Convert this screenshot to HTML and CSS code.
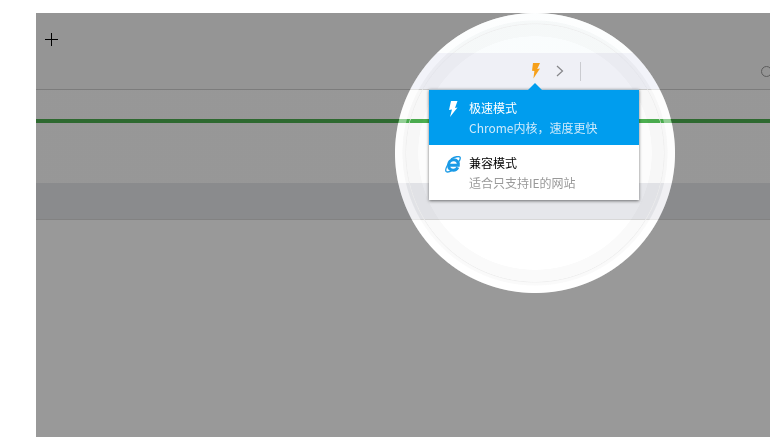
FILE: index.html
```html
<!DOCTYPE html>
<html lang="en">

<head>
    <meta charset="UTF-8" />
    <title>极速模式</title>
    <link rel="stylesheet" href="styles.css">
</head>

<body>
    <div class="screen">
        <div class="tabbar"><span class="new-tab"></span></div>
        <div class="toolbar">
            <svg class="bolt" width="10" height="16" viewBox="0 0 10 16">
                <path d="M2 0H9L6.200 6 9 5.400 2.400 15.500 3.400 8 1 7.700Z" />
            </svg>
            <svg class="chevron" width="8" height="12" viewBox="0 0 8 12">
                <path d="M1 1L6.500 6 1 11" />
            </svg>
            <span class="divider"></span>
            <span class="search"></span>
        </div>
        <div class="gap"></div>
        <div class="progress"></div>
        <div class="content"></div>
        <div class="band"></div>
        <div class="rest"></div>

        <!-- spotlight over the page -->
        <div class="dim"></div>
        <div class="lens"></div>
        <div class="lens-tint"></div>

        <div class="menu">
            <span class="caret"></span>
            <div class="menu-item active">
                <svg class="item-icon" width="16" height="17" viewBox="0 0 16 17">
                    <path d="M6 0H12.500L10 7 12.500 6.500 5 16 7 8.500 4 9Z" fill="#fff" />
                </svg>
                <div>
                    <div class="item-title">极速模式</div>
                    <div class="item-desc">Chrome内核，速度更快</div>
                </div>
            </div>
            <div class="menu-item">
                <svg class="item-icon" width="16" height="17" viewBox="0 0 16 17">
                    <path d="M4 9.300H13.300C13.700 5.800 11.500 3.800 8.800 3.800 5.700 3.800 3.500 6.200 3.500 9.300 3.500 12.300 5.600 14.200 8.300 14.200 10.400 14.200 12 13.200 12.800 11.400" fill="none" stroke="#1a9ae6" stroke-width="3" />
                    <path d="M6 3C10 .6 14 0 15 1.200 15.600 2.200 15 4 13.500 6M3.500 7.500C1 11.500 .2 14.500 1.200 15.500 2.300 16.400 4.700 15.800 7 14.400" fill="none" stroke="#1a9ae6" stroke-width="1.300" />
                </svg>
                <div>
                    <div class="item-title">兼容模式</div>
                    <div class="item-desc">适合只支持IE的网站</div>
                </div>
            </div>
        </div>
    </div>
</body>

</html>
```

FILE: styles.css
```css
/* Reset & base */
* {
    margin: 0;
    padding: 0;
    box-sizing: border-box;
}

html,
body {
    height: 100%;
    overflow: hidden;
    background: white;
    font-family: "Noto Sans CJK SC", "Liberation Sans", sans-serif;
}

body {
    padding: 13px 0 10px 36px;
}

/* Page behind the overlay */
.screen {
    position: relative;
    height: 424px;
    overflow: hidden;
    display: flex;
    flex-direction: column;
    background: #fff;
}

.tabbar {
    height: 40px;
    flex-shrink: 0;
    background: #f8f8f8;
    padding: 20px 0 0 9px;
}

.new-tab {
    display: block;
    width: 13px;
    height: 13px;
    background:
        linear-gradient(#000, #000) center / 13px 1px no-repeat,
        linear-gradient(#000, #000) center / 1px 13px no-repeat;
}

.toolbar {
    height: 37px;
    flex-shrink: 0;
    background: #f8f8f8;
    border-bottom: 1px solid #cfcfcf;
    display: flex;
    align-items: center;
    padding-left: 495px;
}

.toolbar > * {
    flex-shrink: 0;
}

.bolt {
    fill: #ffa51a;
}

.chevron {
    margin-left: 15px;
    fill: none;
    stroke: #8a8a8a;
    stroke-width: 1.2;
}

.divider {
    width: 1px;
    height: 19px;
    margin-left: 16px;
    background: #d2d2d2;
}

.search {
    width: 11px;
    height: 11px;
    margin-left: 180px;
    border: 1.5px solid #999;
    border-radius: 50%;
}

.gap {
    height: 29px;
    background: #fcfcfc;
}

.progress {
    height: 4px;
    background: #4caf50;
}

.content {
    height: 60px;
    background: #fcfcfc;
}

.band {
    height: 37px;
    background: #e6e7eb;
    border-bottom: 1px solid #d8d8d8;
}

.rest {
    flex-grow: 1;
}

/* Spotlight */
.dim {
    position: absolute;
    inset: 0;
    background: radial-gradient(circle at 499px 140px, transparent 139.500px, rgba(0, 0, 0, 0.4) 140.500px);
}

.lens {
    position: absolute;
    left: 359px;
    top: 0;
    width: 280px;
    height: 280px;
    border-radius: 50%;
    background:
        radial-gradient(circle, transparent 116.500px, rgba(0, 0, 0, 0.02) 117px, rgba(0, 0, 0, 0.02) 128.500px, rgba(235, 235, 235, 0.8) 129px, rgba(0, 0, 0, 0.02) 130px, rgba(0, 0, 0, 0.02) 132px, rgba(255, 255, 255, 0.4) 133px),
        linear-gradient(rgba(250, 254, 255, 0.7) 40px, transparent 40px);
}

.lens-tint {
    position: absolute;
    left: 359px;
    top: 0;
    width: 280px;
    height: 280px;
    border-radius: 50%;
    mix-blend-mode: multiply;
    background: linear-gradient(#fff 40px, #f6f7fd 40px, #f6f7fd 76px, #fff 76px);
}

/* Mode menu */
.menu {
    position: absolute;
    left: 393px;
    top: 76px;
    width: 210px;
    background: white;
    border-top: 1px solid #b5c2cc;
    box-shadow: 0 1px 3px rgba(0, 0, 0, 0.55);
}

.caret {
    position: absolute;
    left: 99px;
    top: -7px;
    width: 0;
    height: 0;
    border-left: 7px solid transparent;
    border-right: 7px solid transparent;
    border-bottom: 7px solid #009dee;
}

.menu-item {
    height: 55px;
    display: flex;
    gap: 8px;
    padding: 9px 0 0 16px;
    color: #999;
}

.menu-item.active {
    background: #009dee;
    color: #cdeafb;
}

.item-icon {
    flex-shrink: 0;
    margin-top: 2px;
}

.item-title {
    font-size: 12px;
    line-height: 18px;
    color: #000;
}

.active .item-title {
    color: white;
}

.item-desc {
    font-size: 12px;
    line-height: 18px;
    margin-top: 2px;
}
```
